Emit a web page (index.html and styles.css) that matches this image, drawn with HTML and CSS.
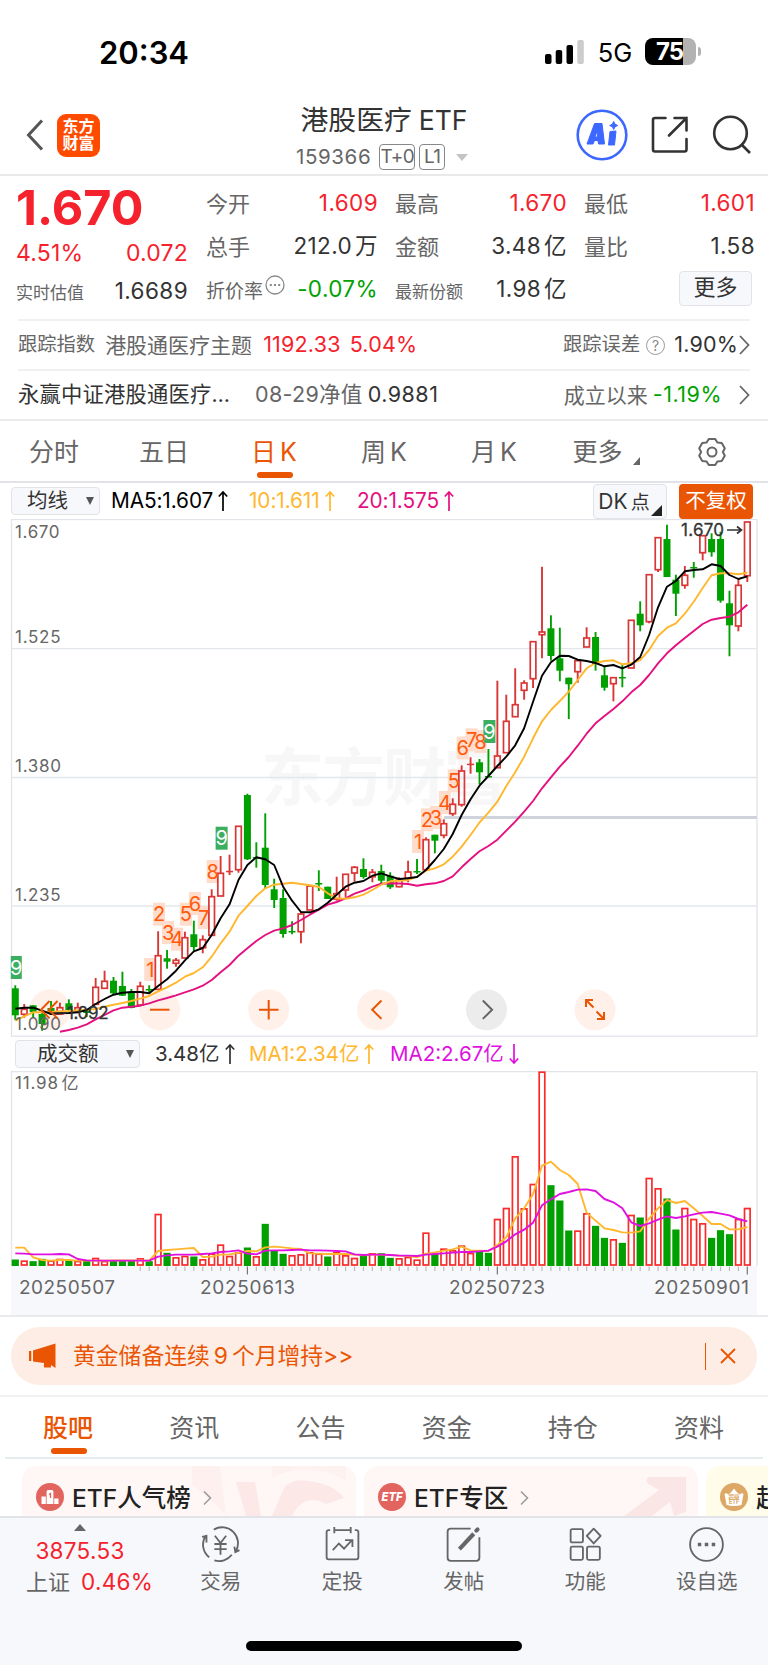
FILE: index.html
```html
<!DOCTYPE html>
<html lang="zh-CN">

<head>
    <meta charset="UTF-8">
    <meta name="viewport" content="width=device-width, initial-scale=1.0">
    <title>港股医疗ETF</title>
    <link rel="stylesheet" href="styles.css">
</head>

<body>
    <div class="status-bar">
        <span class="time">20:34</span>
        <div class="status-right">
            <svg class="signal" width="40" height="26" viewBox="0 0 40 26">
                <rect x="0" y="15" width="6.5" height="10" rx="2" />
                <rect x="10.7" y="11" width="6.5" height="14" rx="2" />
                <rect x="21.5" y="6" width="6.5" height="19" rx="2" />
                <rect x="32.3" y="1" width="6.5" height="24" rx="2" fill="#ccc" />
            </svg>
            <span class="network">5G</span>
            <div class="battery"><span>75</span></div>
            <i class="battery-nub"></i>
        </div>
    </div>

    <header class="header">
        <div class="header-left">
            <svg width="18" height="32" viewBox="0 0 18 32" fill="none" stroke="#555" stroke-width="3">
                <path d="M16 1.5 2.500 16 16 30.500" />
            </svg>
            <div class="logo">东方<br>财富</div>
        </div>
        <div class="header-title">
            <h1>港股医疗<span>ETF</span></h1>
            <div class="header-sub">
                <span class="code">159366</span>
                <span class="tag tag-t0">T+0</span>
                <span class="tag tag-l1">L1</span>
                <i class="drop"></i>
            </div>
        </div>
        <div class="header-right">
            <svg width="52" height="52" viewBox="0 0 52 52">
                <circle cx="26" cy="26" r="24.300" fill="#fff" stroke="#3d68ff" stroke-width="2.600" />
                <path d="M18.500 14.500h7.500l2.500 20.500h-6l-.5-3.500h-3.500L17 35h-6zM21 22l-2 6h2.500z" fill="#3d68ff" fill-rule="evenodd" stroke="#3d68ff" stroke-linejoin="round" />
                <path d="m34 22.500 6-.5-1.500 14h-6z" fill="#3d68ff" stroke="#3d68ff" stroke-linejoin="round" />
                <path d="m37.700 12.500 1.300 2.700 2.700 1.300-2.700 1.300-1.300 2.700-1.300-2.700-2.700-1.300 2.700-1.300z" fill="#3d68ff" stroke="#3d68ff" />
            </svg>
            <svg width="38" height="38" viewBox="0 0 38 38" fill="none" stroke="#333" stroke-width="2.600" stroke-linecap="round">
                <path d="M14.500 2H4Q2 2 2 4V33.500Q2 35.500 4 35.500H33.500Q35.500 35.500 35.500 33.500V23" />
                <path d="M23.500 2H35.500V14.500M35.500 2 18 19.500" />
            </svg>
            <svg width="40" height="40" viewBox="0 0 40 40" fill="none" stroke="#333" stroke-width="2.600">
                <circle cx="18.500" cy="18" r="16.300" />
                <path d="m29.500 29.500 8.500 8.500" />
            </svg>
        </div>
    </header>

    <section class="quote">
        <div class="quote-price">
            <div class="price">1.670</div>
            <div class="change"><span>4.51%</span><span>0.072</span></div>
            <div class="estimate"><label>实时估值</label><span>1.6689</span></div>
        </div>
        <div class="quote-grid">
            <div class="cell"><label>今开</label><span class="red">1.609</span></div>
            <div class="cell"><label>最高</label><span class="red">1.670</span></div>
            <div class="cell"><label>最低</label><span class="red">1.601</span></div>
            <div class="cell"><label>总手</label><span>212.0<em>万</em></span></div>
            <div class="cell"><label>金额</label><span>3.48<em>亿</em></span></div>
            <div class="cell"><label>量比</label><span>1.58</span></div>
            <div class="cell"><label class="mid">折价率<svg class="dots" width="20" height="20" viewBox="0 0 20 20">
                        <circle cx="10" cy="10" r="9" fill="none" stroke="#888" stroke-width="1.300" />
                        <path d="M4.800 9h2v2h-2zM9 9h2v2H9zM13.200 9h2v2h-2z" fill="#888" />
                    </svg></label><span class="green">-0.07%</span></div>
            <div class="cell"><label class="small">最新份额</label><span>1.98<em>亿</em></span></div>
            <div class="cell cell-more"><button class="more">更多</button></div>
        </div>
    </section>

    <section class="info">
        <div class="info-row">
            <span class="gray s19">跟踪指数</span>
            <span class="gray index-name">港股通医疗主题</span>
            <span class="red index-value">1192.33</span>
            <span class="red">5.04%</span>
            <div class="info-right">
                <span class="gray s19">跟踪误差</span>
                <span class="help">?</span>
                <span class="error-value">1.90%</span>
                <svg class="arrow" width="11" height="20" viewBox="0 0 11 20"><path d="m1 1 8.500 9L1 19" /></svg>
            </div>
        </div>
        <div class="info-row">
            <span class="fund-name">永赢中证港股通医疗…</span>
            <span class="gray nav-date">08-29净值</span>
            <span class="nav-value">0.9881</span>
            <div class="info-right">
                <span class="gray since">成立以来</span>
                <span class="green since-value">-1.19%</span>
                <svg class="arrow" width="11" height="20" viewBox="0 0 11 20"><path d="m1 1 8.500 9L1 19" /></svg>
            </div>
        </div>
    </section>

    <nav class="period">
        <a>分时</a>
        <a>五日</a>
        <a class="active">日<b>K</b></a>
        <a>周<b>K</b></a>
        <a>月<b>K</b></a>
        <a class="has-corner">更多</a>
        <a>
            <svg width="30" height="30" viewBox="0 0 30 30" fill="none" stroke="#666" stroke-width="2">
                <path d="M11.800 2h6.400l2.200 3.600 4.300.3 3.100 5.300-1.900 3.800 1.900 3.800-3.100 5.300-4.300.3L18.200 28h-6.400l-2.200-3.600-4.300-.3-3.100-5.300L4.100 15 2.200 11.200l3.100-5.300 4.300-.3z" stroke-linejoin="round" />
                <circle cx="15" cy="15" r="4.500" />
            </svg>
        </a>
    </nav>

    <section class="chart">
        <div class="toolbar">
            <button class="select select-ma">均线<i></i></button>
            <span class="ma5">MA5:1.607<svg class="up" viewBox="0 0 10 20"><path d="M5 20V1M.8 5.500 5 1l4.200 4.500" /></svg></span>
            <span class="ma10">10:1.611<svg class="up" viewBox="0 0 10 20"><path d="M5 20V1M.8 5.500 5 1l4.200 4.500" /></svg></span>
            <span class="ma20">20:1.575<svg class="up" viewBox="0 0 10 20"><path d="M5 20V1M.8 5.500 5 1l4.200 4.500" /></svg></span>
            <button class="dk">DK<em>点</em></button>
            <button class="adjust">不复权</button>
        </div>
        <svg id="kline" width="768" height="518" viewBox="0 519 768 518"></svg>
        <div class="toolbar toolbar-vol">
            <button class="select select-vol">成交额<i></i></button>
            <span class="vol">3.48亿<svg class="up" viewBox="0 0 10 20"><path d="M5 20V1M.8 5.500 5 1l4.200 4.500" /></svg></span>
            <span class="vol-ma1">MA1:2.34亿<svg class="up" viewBox="0 0 10 20"><path d="M5 20V1M.8 5.500 5 1l4.200 4.500" /></svg></span>
            <span class="vol-ma2">MA2:2.67亿<svg class="up" viewBox="0 0 10 20"><path d="M5 0v19M.8 14.500 5 19l4.200-4.500" /></svg></span>
        </div>
        <svg id="volume" width="768" height="244" viewBox="0 1071 768 244"></svg>
    </section>

    <section class="notice">
        <div class="notice-bar">
            <svg width="30" height="26" viewBox="0 0 30 26" fill="#ea5504">
                <path d="M1 8h2.300v10H1zM5 7.500 27.500 0.500v24.500L23 22v2.500h-7V20L5 18.500z" />
            </svg>
            <span class="notice-text">黄金储备连续<b>9</b>个月增持&gt;&gt;</span>
            <i class="notice-line"></i>
            <svg width="16" height="16" viewBox="0 0 16 16" stroke="#ea5504" stroke-width="1.800"><path d="m1 1 14 14M15 1 1 15" /></svg>
        </div>
    </section>

    <nav class="tabs">
        <a class="active">股吧</a>
        <a>资讯</a>
        <a>公告</a>
        <a>资金</a>
        <a>持仓</a>
        <a>资料</a>
    </nav>

    <section class="cards">
        <div class="card">
            <svg class="card-bg" width="170" height="50" viewBox="0 0 170 50">
                <path d="M6 0h28l6 50H42L6 18z" fill="#fdf0ef" />
                <path d="M50 16h19l6 34H60zM86 50 98 22Q106 12 122 15 148 18 158 32L140 38Q118 26 106 50z" fill="#fce8e7" />
                <path d="M86 12Q120-6 160 14V0H86z" fill="#fef2f1" />
            </svg>
            <svg class="card-icon" width="28" height="28" viewBox="0 0 28 28">
                <circle cx="14" cy="14" r="14" fill="#e2645f" />
                <path d="M5.500 13.500h4.300V21H5.500zM10.600 8.500q0-1.500 1.500-1.500h3.800q1.500 0 1.500 1.500V21h-6.800zM18.200 15.500h4.300V21h-4.300z" fill="#fff" />
                <path d="M13 11.500 14.500 10.500V15" fill="none" stroke="#e2645f" stroke-width="1.300" />
            </svg>
            <b>ETF人气榜</b>
            <svg class="card-arrow" width="9" height="16" viewBox="0 0 9 16"><path d="m1 1.500 6.500 6.500L1 14.500" /></svg>
        </div>
        <div class="card">
            <svg class="card-bg card-bg-arrow" width="90" height="50" viewBox="0 0 90 50">
                <path d="M0 50 35 24 24 18Q20 12 26 11H62V46L50 50 46 36 28 50z" fill="#fbe6e6" />
            </svg>
            <svg class="card-icon" width="28" height="28" viewBox="0 0 28 28">
                <circle cx="14" cy="14" r="14" fill="#e2645f" />
                <text x="14" y="18.300" class="icon-etf" textLength="21" lengthAdjust="spacingAndGlyphs">ETF</text>
            </svg>
            <b>ETF专区</b>
            <svg class="card-arrow" width="9" height="16" viewBox="0 0 9 16"><path d="m1 1.500 6.500 6.500L1 14.500" /></svg>
        </div>
        <div class="card card-yellow">
            <svg class="card-icon" width="28" height="28" viewBox="0 0 28 28">
                <circle cx="14" cy="14" r="14" fill="#dda766" />
                <path d="M4.500 11q1.500-1.500 4 .5Q11 10 14 5.500 17 10 19.500 11.500q2.500-2 4-.5L21.500 22q-7.500 2-15 0z" fill="#fff" />
                <text x="14" y="16" class="icon-tiny">超级</text>
                <text x="14" y="21" class="icon-tiny">ETF</text>
            </svg>
            <b>超级ETF</b>
        </div>
    </section>

    <footer class="bottom-bar">
        <div class="index">
            <i></i>
            <div class="red index-point">3875.53</div>
            <div class="index-line"><span class="gray">上证</span><span class="red">0.46%</span></div>
        </div>
        <div class="action">
            <svg viewBox="0 0 40 36">
                <path d="M9 30.500A15.500 15.500 0 0 1 6 9M2 10.500 6.300 9.500V16M13.500 3.500A15.500 15.500 0 0 1 35 24.500M38.500 23.500 34.500 25.500 33.500 20M31 28A15.500 15.500 0 0 1 14 33.500" />
                <path d="m14.500 9.500 5.500 7 5.500-7M20 16.500V28M14 17.500h12M14 22.500h12" />
            </svg>
            <span>交易</span>
        </div>
        <div class="action">
            <svg viewBox="0 0 40 36">
                <path d="M8 4H6.500Q4.500 4 4.500 6V30.500Q4.500 32.500 6.500 32.500H33.500Q35.500 32.500 35.500 30.500V6Q35.500 4 33.500 4H32M12.500 4h15M12 1v6M28 1v6M10.500 23.500 16.500 17l5 5L29 14M22.500 13.800h7.200V20.500" />
            </svg>
            <span>定投</span>
        </div>
        <div class="action">
            <svg viewBox="0 0 40 36">
                <path d="M27 2.500H7.500Q4.500 2.500 4.500 5.500V31Q4.500 34 7.500 34H32.500Q35.500 34 35.500 31V11" />
                <path d="M16 22.500 30 7.500" stroke-width="4" />
                <path d="m32.500 4.500 1.200-1.200" stroke-width="4" stroke-linecap="round" />
            </svg>
            <span>发帖</span>
        </div>
        <div class="action">
            <svg viewBox="0 0 40 36">
                <rect x="5.500" y="3" width="12" height="13" rx="1.500" />
                <path d="m28 2.500 6.800 7.200L28 17l-6.800-7.300z" stroke-linejoin="round" />
                <rect x="5.500" y="20" width="12" height="13" rx="1.500" />
                <rect x="21.500" y="20" width="12.500" height="13" rx="1.500" />
            </svg>
            <span>功能</span>
        </div>
        <div class="action">
            <svg viewBox="0 0 40 36">
                <circle cx="20" cy="18" r="16" />
                <path d="M11.500 18h3.400M18.300 18h3.400M25.100 18h3.400" stroke-width="3.400" />
            </svg>
            <span>设自选</span>
        </div>
        <div class="home"></div>
    </footer>

    <script src="chart.js"></script>
</body>

</html>
```
FILE: styles.css
```css
* {
    box-sizing: border-box;
}

body {
    margin: 0;
    width: 768px;
    height: 1665px;
    overflow: hidden;
    background-color: #fff;
    color: #333;
    font-family: Inter, "Noto Sans CJK SC", sans-serif;
    font-size: 22px;
    line-height: 1;
    display: flex;
    flex-direction: column;
}

body > * {
    flex-shrink: 0;
}

em,
i {
    font-style: normal;
}

svg {
    display: block;
    flex-shrink: 0;
}

button {
    font-family: inherit;
    line-height: 1;
    padding: 0;
    color: #333;
    background-color: #f7f8fb;
    border: 1px solid #e1e3e8;
    border-radius: 4px;
}

.red {
    color: #f5222d;
}

.green {
    color: #00a200;
}

.gray {
    color: #666;
}

/* status bar */
.status-bar {
    height: 96px;
    padding: 10px 67px 0 99px;
    display: flex;
    align-items: center;
    justify-content: space-between;
    color: #000;
}

.time {
    font-size: 31px;
    font-weight: 600;
    letter-spacing: 0;
    margin-top: -1px;
}

.status-right {
    display: flex;
    align-items: center;
    margin-top: -3px;
}

.network {
    font-size: 25.500px;
    letter-spacing: -0.2px;
    margin-left: 13px;
    margin-top: 3px;
}

.battery {
    width: 51px;
    height: 27px;
    margin-left: 13px;
    border-radius: 8px;
    background: linear-gradient(to right, #000 38px, #b2b2b2 38px);
    color: #fff;
    font-size: 24px;
    font-weight: 700;
    letter-spacing: -1px;
    display: flex;
    align-items: center;
    padding-left: 11px;
}

.battery-nub {
    width: 3px;
    height: 9px;
    margin-left: 2px;
    border-radius: 0 4px 4px 0;
    background-color: #b2b2b2;
}

/* header */
.header {
    height: 80px;
    border-bottom: 2px solid #e9e9ec;
    display: grid;
    grid-template-columns: 250px 1fr 250px;
    align-items: center;
}

.header-left {
    display: flex;
    align-items: center;
    gap: 13px;
    padding-left: 26px;
}

.logo {
    width: 43px;
    height: 43px;
    border-radius: 9px;
    background-color: #ff4b00;
    color: #fff;
    font-size: 16px;
    font-weight: 700;
    line-height: 17px;
    text-align: center;
    padding-top: 4px;
}

.header-title {
    text-align: center;
}

h1 {
    margin: 0;
    font-size: 27.800px;
    font-weight: 400;
    line-height: 34px;
    padding-top: 4px;
    white-space: nowrap;
}

h1 span {
    margin-left: 7px;
    font-size: 26.500px;
    letter-spacing: 0;
}

.header-sub {
    display: flex;
    align-items: center;
    padding-left: 46px;
    margin-top: 6px;
    height: 28px;
    color: #666;
}

.code {
    font-size: 20.500px;
    letter-spacing: 0.6px;
    margin-right: 8px;
}

.tag {
    height: 26px;
    border: 1.5px solid #888;
    border-radius: 4px;
    font-size: 19px;
    line-height: 24px;
    letter-spacing: -0.6px;
    text-align: center;
}

.tag-t0 {
    width: 36px;
    margin-right: 4px;
}

.tag-l1 {
    width: 26px;
}

.drop {
    margin-left: 11px;
    border: 6px solid transparent;
    border-top: 7px solid #c4c4c4;
    border-bottom: 0;
}

.header-right {
    display: flex;
    align-items: center;
    justify-content: flex-end;
    padding-right: 16px;
}

.header-right svg:nth-child(2) {
    margin: 0 23px 0 23px;
}

/* quote */
.quote {
    height: 143px;
    display: flex;
    padding: 0 12px 0 16px;
}

.quote-price {
    width: 172px;
    margin-right: 18px;
    color: #f5222d;
}

.price {
    font-size: 48.500px;
    font-weight: 700;
    letter-spacing: 0;
    line-height: 63px;
    height: 65px;
}

.change {
    display: flex;
    justify-content: space-between;
    font-size: 23px;
    letter-spacing: 0.2px;
    line-height: 25px;
    height: 37px;
}

.estimate {
    display: flex;
    justify-content: space-between;
    align-items: center;
    color: #333;
    line-height: 24px;
    margin-top: -2px;
}

.estimate span {
    font-size: 22.500px;
    letter-spacing: 0.4px;
}

.estimate label {
    font-size: 17px;
    color: #666;
    padding-top: 5px;
}

.quote-grid {
    flex-grow: 1;
    display: grid;
    grid-template-columns: 172px 172px 171px;
    grid-template-rows: 43px 43px 43px;
    column-gap: 17px;
    padding-top: 6px;
}

.cell {
    display: flex;
    align-items: center;
    justify-content: space-between;
    font-size: 22.500px;
    letter-spacing: 0.4px;
    white-space: nowrap;
}

.cell label {
    font-size: 22px;
    color: #666;
    letter-spacing: 0;
}

.cell em {
    margin-left: 3px;
}

.cell .mid {
    font-size: 19px;
    display: flex;
    padding-top: 3px;
}

.dots {
    margin: -7px 0 0 2px;
}

.cell .small {
    font-size: 17px;
    padding-top: 5px;
}

.cell-more {
    justify-content: flex-end;
    padding-right: 3px;
}

.more {
    width: 73px;
    height: 35px;
    margin-top: -3px;
    font-size: 22px;
    padding-bottom: 2px;
}

/* index and fund rows */
.info {
    padding: 0 18px;
    border-bottom: 2px solid #ebebee;
    height: 102px;
}

.info-row {
    height: 50px;
    border-top: 2px solid #f0f0f2;
    display: flex;
    align-items: center;
    font-size: 21.500px;
    letter-spacing: 0.2px;
    white-space: nowrap;
}

.info .s19 {
    font-size: 19.300px;
    letter-spacing: 0;
}

.index-name {
    margin: 0 11px 0 10px;
    font-size: 21px;
    letter-spacing: 0;
}

.index-value {
    margin-right: 9px;
}

.info-right {
    margin-left: auto;
    display: flex;
    align-items: center;
}

.help {
    width: 19px;
    height: 19px;
    margin: 0 9px 0 6px;
    border: 1.300px solid #999;
    border-radius: 50%;
    color: #888;
    font-size: 14px;
    line-height: 17px;
    text-align: center;
}

.error-value {
    margin-right: 1px;
}

.arrow {
    fill: none;
    stroke: #666;
    stroke-width: 1.800;
}

.fund-name {
    font-size: 21.300px;
}

.nav-date {
    margin: 0 5px 0 25px;
    font-size: 21.500px;
    letter-spacing: 0.3px;
}

.nav-value {
    letter-spacing: 0.5px;
}

.since {
    font-size: 21px;
    letter-spacing: 0;
}

.since-value {
    margin: 0 17px 0 5px;
    letter-spacing: 0.5px;
}

/* period tabs */
.period {
    height: 62px;
    border-bottom: 2px solid #e2e3e9;
    display: grid;
    grid-template-columns: repeat(7, 110px);
    margin-left: -1px;
    color: #666;
    font-size: 25px;
}

.period a {
    display: flex;
    align-items: center;
    justify-content: center;
    position: relative;
    padding-top: 2px;
}

.period b {
    font-weight: 400;
    margin-left: 4px;
    font-size: 25px;
}

.period .active,
.tabs .active {
    color: #ea5504;
}

.tabs .active {
    font-weight: 500;
}

.period .active::after {
    content: "";
    position: absolute;
    left: 38px;
    bottom: 3px;
    width: 36px;
    height: 6px;
    border-radius: 3px;
    background-color: #ea5504;
}

.period .has-corner {
    padding-right: 13px;
}

.has-corner::after {
    content: "";
    position: absolute;
    right: 19px;
    bottom: 16px;
    border-left: 7px solid transparent;
    border-bottom: 8px solid #666;
}

.period a:last-child {
    padding-right: 4px;
}

/* chart */
.toolbar {
    height: 36px;
    display: flex;
    align-items: center;
    padding: 0 15px 0 11px;
    font-size: 20.800px;
    letter-spacing: -0.1px;
    white-space: nowrap;
}

.toolbar span {
    display: flex;
    align-items: center;
}

.select {
    height: 28px;
    font-size: 20.500px;
    display: flex;
    align-items: center;
    justify-content: space-between;
}

.select i {
    border: 4.500px solid transparent;
    border-top: 8px solid #555;
    border-bottom: 0;
}

.select-ma {
    width: 89px;
    padding: 0 5px 0 15px;
    margin-right: 11px;
}

.up {
    width: 10px;
    height: 20px;
    margin-left: 5px;
    fill: none;
    stroke: currentColor;
    stroke-width: 1.700;
}

.ma5 {
    color: #000;
    width: 138px;
}

.ma10 {
    color: #ffb72e;
    width: 108px;
}

.ma20 {
    color: #e4107f;
}

.dk {
    width: 74px;
    height: 35px;
    margin-left: auto;
    margin-right: 12px;
    padding-right: 12px;
    font-size: 21px;
    position: relative;
}

.dk em {
    margin-left: 3px;
    font-size: 19px;
}

.dk::after {
    content: "";
    position: absolute;
    right: 4px;
    bottom: 2px;
    border-left: 11px solid transparent;
    border-bottom: 11px solid #222;
}

.adjust {
    width: 74px;
    height: 35px;
    color: #fff;
    background-color: #ea5504;
    border: 0;
    font-size: 20.500px;
}

.toolbar-vol {
    height: 34px;
    padding-left: 15px;
}

.select-vol {
    width: 125px;
    padding: 0 5px 0 21px;
    margin-right: 15px;
}

.vol {
    width: 94px;
}

.toolbar .vol,
.toolbar .vol-ma1,
.toolbar .vol-ma2 {
    font-size: 20.500px;
    letter-spacing: 0;
}

.vol-ma1 {
    color: #ffb72e;
    width: 141px;
}

.vol-ma2 {
    color: #e010e0;
}

.axis {
    font-size: 17px;
    fill: #666;
}

.date {
    font-size: 19px;
    fill: #666;
}

.extreme {
    font-size: 17px;
    fill: #333;
    stroke: #333;
    stroke-width: 0.300;
}

.badge {
    font-size: 20px;
    text-anchor: middle;
}

.watermark {
    font-size: 63px;
    font-weight: 700;
    fill: #f7f7f7;
}

/* notice */
.notice {
    height: 82px;
    padding: 10px 11px 0;
    border-top: 2px solid #e9eaee;
    border-bottom: 2px solid #f1f1f4;
}

.notice-bar {
    height: 58px;
    border-radius: 29px;
    background-color: #feede4;
    color: #ea5504;
    display: flex;
    align-items: center;
    padding: 0 21px 0 17px;
}

.notice-text {
    margin-left: 15px;
    font-size: 22.800px;
}

.notice-text b {
    font-weight: 400;
    margin: 0 4px;
}

.notice-line {
    width: 1.500px;
    height: 27px;
    margin: 0 14px 0 auto;
    background-color: #ea5504;
}

/* content tabs */
.tabs {
    height: 62px;
    margin: 0 5px;
    border-bottom: 2px solid #e6ebed;
    display: grid;
    grid-template-columns: repeat(6, 126.200px);
    color: #666;
    font-size: 25px;
}

.tabs a {
    position: relative;
    display: flex;
    align-items: center;
    justify-content: center;
    padding-top: 2px;
}

.tabs .active::after {
    content: "";
    position: absolute;
    left: 46px;
    bottom: 3px;
    width: 36px;
    height: 6px;
    border-radius: 3px;
    background-color: #ea5504;
}

/* cards */
.cards {
    height: 57px;
    padding: 7px 0 0 22px;
    display: flex;
    gap: 8px;
    overflow: hidden;
}

.card {
    position: relative;
    width: 334px;
    height: 80px;
    flex-shrink: 0;
    border-radius: 14px;
    background-color: #fff7f6;
    overflow: hidden;
    display: flex;
    align-items: flex-start;
    padding: 17px 0 0 14px;
}

.card-bg {
    position: absolute;
    right: 0;
    top: 0;
}

.card-bg-arrow {
    right: -36px;
    width: 130px;
}

.card b {
    position: relative;
    margin: 2px 12px 0 8px;
    color: #222;
    font-size: 24.500px;
    font-weight: 500;
    line-height: 26px;
    white-space: nowrap;
}

.card-arrow {
    margin-top: 7px;
    position: relative;
    fill: none;
    stroke: #999;
    stroke-width: 1.500;
}

.card-yellow {
    background-color: #fffcea;
}

.icon-etf {
    fill: #fff;
    font-size: 12px;
    font-weight: 800;
    font-style: italic;
    text-anchor: middle;
}

.icon-tiny {
    fill: #dda766;
    font-size: 5.500px;
    font-weight: 700;
    text-anchor: middle;
}

/* bottom bar */
.bottom-bar {
    position: relative;
    height: 149px;
    border-top: 2px solid #e1e3e8;
    background-color: #f7f8fb;
    display: flex;
}

.index {
    width: 160px;
    display: flex;
    flex-direction: column;
    align-items: center;
    padding-top: 6px;
}

.index i {
    border: 6px solid transparent;
    border-bottom: 7px solid #666;
    border-top: 0;
}

.index-point {
    margin: 8px 0 8px;
    line-height: 24px;
}

.index-line {
    width: 160px;
    padding-left: 26px;
    display: flex;
    gap: 11px;
}

.index .red {
    font-size: 22.500px;
    letter-spacing: 0.3px;
}

.action {
    width: 121.500px;
    display: flex;
    flex-direction: column;
    align-items: center;
    padding-top: 8px;
    color: #666;
    font-size: 20.500px;
}

.action svg {
    width: 41px;
    height: 37px;
    margin-bottom: 9px;
    fill: none;
    stroke: #666;
    stroke-width: 1.800;
}

.home {
    position: absolute;
    left: 246px;
    bottom: 14px;
    width: 276px;
    height: 10px;
    border-radius: 5px;
    background-color: #000;
}
```
FILE: chart.js
```js
const RED = '#d93636'
const GREEN = '#00a000'
const x = (i) => 15.3 + i * 8.927

// direction, body top, body bottom, high, low
const candles = [
    ['g', 988.3, 1015.3, 985.3, 1020], ['r', 1009.3, 1014.3, 1004, 1017.7], ['g', 1005.3, 1012, 1005.3, 1017], ['g', 1014, 1024, 1013, 1030.7],
    ['g', 1008, 1013, 1001, 1015], ['r', 1007.7, 1014, 1002.7, 1014], ['g', 1003.3, 1010, 999.3, 1011], ['r', 1007.7, 1011, 1002.7, 1011],
    ['g', 1010, 1013, 1009, 1017], ['r', 987.3, 1004.3, 978, 1004.3], ['r', 981.3, 988.3, 970.7, 988.3], ['g', 980.7, 993.3, 977, 994],
    ['g', 986, 995.7, 971.7, 996], ['g', 992, 1008, 989, 1008.3], ['r', 986.3, 1005, 981.7, 1005], ['g', 989, 990.3, 985.3, 993.7],
    ['r', 955.7, 989.3, 931.3, 989.3], ['g', 958.3, 961.7, 950, 968.7], ['r', 960.3, 963.3, 958, 966.7], ['r', 937.7, 958, 931.7, 958],
    ['g', 934.3, 947, 920.7, 951.7], ['r', 939.7, 947.7, 935.3, 953.3], ['r', 896.7, 935.3, 889.3, 936], ['r', 873.3, 896, 856, 896],
    ['r', 870.8, 871.4, 854.7, 875], ['r', 826.3, 869.7, 826, 872.7], ['g', 795, 859.3, 793.7, 860], ['g', 857, 858, 842.3, 867.7],
    ['g', 847.7, 885, 813.3, 888], ['g', 889.3, 900, 878.7, 908], ['g', 898, 934, 889.3, 937.7], ['g', 931, 932, 921.3, 934.3],
    ['r', 914, 931.7, 912, 943.3], ['r', 886, 910, 886, 910], ['g', 883, 884, 870.3, 891], ['g', 886.7, 899, 886.7, 899],
    ['r', 893.7, 899, 876.7, 900.7], ['r', 874.3, 890, 874.3, 897.3], ['r', 867.3, 873, 866, 881.7], ['g', 869, 877, 858.3, 878.7],
    ['r', 872.3, 876.7, 869, 882.3], ['g', 871, 880.7, 864.7, 884.7], ['g', 875.7, 887.3, 872.3, 889], ['r', 880, 886.7, 877.3, 887.3],
    ['r', 872, 878, 860.7, 882.3], ['g', 871, 872, 859, 874], ['r', 839.7, 869.7, 837.3, 870], ['g', 834.7, 840.7, 834.7, 853.3],
    ['r', 823.7, 835.3, 819.3, 838.3], ['r', 804.3, 813.7, 798.3, 816], ['r', 771, 804.7, 765.3, 806.7], ['r', 763.7, 765, 757.3, 773.7],
    ['g', 762.3, 772.3, 759, 784.3], ['g', 776, 777, 749, 777.3], ['r', 756, 767.7, 680.7, 768], ['r', 721.3, 752.7, 694.7, 753],
    ['r', 704.7, 716.7, 668.3, 717], ['r', 683, 690.3, 680.3, 699.7], ['r', 641.7, 678.7, 641, 688], ['r', 632, 634.7, 566.7, 658.3],
    ['g', 628.3, 656, 615.3, 660.7], ['g', 658.3, 670.7, 627.7, 681.3], ['g', 677.7, 684.3, 677.7, 719], ['r', 660.7, 671.7, 659.7, 682.7],
    ['r', 638, 647, 627.3, 647], ['g', 637, 664, 632, 670.7], ['g', 675.3, 687.7, 666.7, 690.7], ['r', 677.7, 683.7, 677.7, 701.3],
    ['g', 677, 678, 665, 687.3], ['r', 620.3, 668, 620.3, 668], ['g', 613.7, 625.3, 601.3, 631.3], ['r', 574.7, 621.7, 574, 623.3],
    ['r', 537.7, 569.7, 537, 572], ['g', 539, 577, 524.7, 577], ['g', 579.7, 593.7, 574.7, 616], ['r', 575.3, 585.3, 566, 588.7],
    ['g', 567, 568.5, 562, 577.7], ['r', 535.7, 552.7, 535, 560.3], ['g', 539, 552.3, 533.3, 556.7], ['g', 539, 600.7, 531.7, 602.7],
    ['g', 603.3, 625.3, 590.7, 656.3], ['r', 585.3, 626, 578, 631.3], ['r', 522, 575.7, 522, 582]
]

const ma5 = [1008.7, 1007.7, 1007.7, 1010.7, 1014, 1013.3, 1013, 1012.3, 1010, 1004, 999, 994.7, 992.7, 992, 992, 993.3, 986, 979.3, 970.7, 960.3,
    951.3, 948, 935, 918.3, 904.3, 880, 865, 857.3, 859.3, 865, 886.7, 900.7, 912, 912.3, 909.3, 902.7, 894.7, 886.7, 882.7, 881,
    875.7, 873.3, 876.3, 879, 878.3, 877, 870, 860, 849, 834, 815, 799.3, 785.7, 776, 766, 756.7, 745.3, 728.3, 701.7, 675.7,
    662.3, 655.7, 656, 659.7, 661, 663, 666.3, 665, 668.3, 664.7, 657, 635, 607.3, 586.7, 581, 571.3, 570, 569.3, 564.3, 566, 575, 579, 576.3]
const ma10 = [1020.7, 1016.3, 1012.3, 1012.3, 1012, 1011.3, 1011, 1010.3, 1009.7, 1009, 1006.7, 1004.7, 1003, 1001, 998.7, 996, 991.3, 987.3, 982.7, 976.7,
    973, 967.3, 956.7, 943.3, 931.7, 915.7, 906, 896, 888.3, 884.7, 883.7, 882.7, 884, 885.3, 887, 893.3, 898.3, 898.7, 897.3, 894.7,
    890, 884.7, 881.3, 880.7, 880, 876.7, 870.7, 868.3, 864.3, 856.7, 846.7, 835, 822.5, 812.7, 801.7, 786, 772.3, 756.7, 738.3, 721.3,
    710, 701, 691.7, 680, 668.3, 663, 661, 660.3, 664.3, 663.3, 660, 650, 636, 627.7, 623.3, 613.7, 601.7, 588, 575.3, 573.3, 573.3, 574.3, 572.7]
const ma20 = [1031.7, 1030, 1027.7, 1024.3, 1019.3, 1015, 1010.3, 1007.7, 1006.7, 1005.7, 1003.3, 1000.3, 998, 995.3, 992.3,
    989.3, 985.7, 980, 972.3, 965, 955.7, 948.3, 941, 935, 930.7, 928.3, 925, 920, 914.7, 909.7, 904.7, 902, 898.3, 893.7, 890.7,
    886.7, 883.7, 883.3, 883.5, 884, 885.7, 884.3, 883.3, 881, 876.3, 867.3, 859, 851.3, 846, 839.7, 830.7, 821.7, 811.7, 801, 788.3,
    777.3, 766.7, 757, 745.7, 733.7, 723.3, 716, 709, 701.3, 692.3, 685, 675, 663.3, 653.3, 645.3, 638, 631, 624, 619.7, 618, 616.7, 612.3, 604.7]

// candle index, label, top
const badges = [
    [0, '9', 956], [15, '1', 958], [16, '2', 902.7], [17, '3', 921], [18, '4', 927.7], [19, '5', 902.7], [20, '6', 892], [21, '7', 906],
    [22, '8', 860], [23, '9', 826.7], [45, '1', 830], [46, '2', 808.3], [47, '3', 806], [48, '4', 791], [49, '5', 769.3],
    [50, '6', 736.5], [51, '7', 728.3], [52, '8', 730], [53, '9', 720]
]

const volumes = [690, 693, 695, 688, 693, 688, 694, 694, 694, 685, 694, 694, 693, 693, 686, 695, 553, 670, 683, 679,
    681, 689, 672, 645, 679, 668, 654, 680, 583, 662, 673, 677, 674, 668, 672, 681, 668, 677, 685, 674,
    671, 671, 685, 686, 682, 690, 609, 672, 657, 662, 648, 670, 666, 670, 568, 535, 380, 536, 463, 126,
    467, 513, 603, 603, 551, 589, 625, 629, 640, 556, 564, 445, 476, 507, 600, 535, 568, 581, 625, 602, 614, 568, 535]
const volumeColors = 'grggrrgrgrrgggrgrgrrgrrrrrgrgggrrrrgrrrgrggrrrrgrrrrggrrrrrrgggrrggrgrgrrggrrrgggrr'
const volMa1 = [653, 653, 682, 690, 692, 690, 690, 692, 692, 692, 692, 691, 691, 691, 691, 692, 663, 660, 658, 656,
    654, 681, 680, 674, 673, 668, 663, 664, 652, 650, 652, 655, 657, 670, 671, 672, 672, 672, 674, 676,
    674, 674, 675, 677, 678, 682, 671, 667, 662, 658, 650, 661, 662, 663, 645, 622, 565, 535, 492, 407,
    395, 420, 435, 462, 548, 572, 595, 600, 607, 608, 604, 566, 535, 510, 519, 513, 535, 558, 582, 582, 598, 598, 591]
const volMa2 = [670, 671, 673, 673, 673, 672, 673, 687, 691, 692, 692, 692, 692, 692, 692, 692, 680, 676, 674, 674,
    674, 672, 670, 666, 664, 661, 671, 673, 662, 661, 661, 660, 659, 661, 661, 662, 663, 664, 673, 675,
    674, 674, 675, 677, 677, 678, 674, 672, 670, 668, 666, 666, 664, 662, 650, 634, 613, 599, 578, 526,
    508, 492, 486, 479, 478, 483, 507, 517, 535, 577, 588, 580, 569, 559, 564, 559, 553, 548, 546, 551, 556, 567, 574]
const volY = (v) => 1030 + v / 3

function rect(x, y, w, h, attrs) {
    return `<rect x="${x}" y="${y}" width="${w}" height="${h}" ${attrs}/>`
}

function hline(y, color, width = 1, x1 = 11, x2 = 757) {
    return `<path d="M${x1} ${y}H${x2}" stroke="${color}" stroke-width="${width}"/>`
}

function curve(values, color, start = 0, toY = (v) => v) {
    const points = values.map((v, i) => `${x(i + start)},${toY(v)}`).join(' ')
    return `<polyline points="${points}" fill="none" stroke="${color}" stroke-width="1.9" stroke-linejoin="round"/>`
}

function label(x, y, text, cls, length) {
    return `<text x="${x}" y="${y}" class="${cls}" textLength="${length}">${text}</text>`
}

function drawKline() {
    let s = '<text x="261" y="800" class="watermark" textLength="246">东方财富</text>'
    s += rect(11.5, 519.5, 745.5, 516.7, 'fill="none" stroke="#e3e4ea" stroke-width="1.3"')
    for (const y of [648.7, 777.5, 906]) s += hline(y, '#e3e7ec', 1.3)

    const buttons = [50, 159.7, 268.7, 377.7, 486.5, 595]
    buttons.forEach((cx, i) => {
        s += `<circle cx="${cx}" cy="1009.7" r="20.5" fill="${i === 4 ? '#ececec' : '#fff1ea'}"/>`
    })
    s += hline(817.5, '#cfd4dc', 3, 444)

    for (const [i, text, top] of badges) {
        const nine = text === '9'
        s += rect(x(i) + 1 - 6 + (i ? 0 : 0.5), top, i ? 12 : 11, 23, `fill="${nine ? '#3bae60' : '#ffdccb'}"`)
    }

    candles.forEach(([dir, top, bottom, high, low], i) => {
        const cx = x(i)
        const color = dir === 'r' ? RED : GREEN
        const wick = (a, b) => b > a ? `<path d="M${cx} ${a}V${b}" stroke="${color}" stroke-width="1.9"/>` : ''
        if (dir === 'r' && bottom - top > 2) {
            s += wick(high, top) + wick(bottom, low)
            s += rect(cx - 2.8, top, 5.6, bottom - top, `fill="none" stroke="${color}" stroke-width="1.7"`)
        } else {
            s += wick(high, low) + rect(cx - 3.5, top, 7, Math.max(bottom - top, 1.5), `fill="${color}"`)
        }
    })

    s += curve(ma20, '#e4107f', 5) + curve(ma10, '#ffb72e') + curve(ma5, '#000')

    for (const [i, text, top] of badges) {
        s += `<text x="${x(i) + 1}" y="${top + 18.7}" class="badge" fill="${text === '9' ? '#fff' : '#ff5a0a'}">${text}</text>`
    }

    s += label(15, 537.7, '1.670', 'axis', 44.5)
    s += label(15, 642.5, '1.525', 'axis', 45.5)
    s += label(15, 771.5, '1.380', 'axis', 46)
    s += label(15, 900.5, '1.235', 'axis', 45.5)
    s += label(15, 1030, '1.090', 'axis', 46)
    s += label(67, 1019, '1.092', 'extreme', 41.5)
    s += label(681, 536.3, '1.670', 'extreme', 43)
    s += '<path d="M727 530h14M737 526.500l4.500 3.500-4.500 3.500" fill="none" stroke="#333" stroke-width="1.7"/>'
    s += '<path d="M50 1013h16" stroke="#333" stroke-width="1.5"/>'

    s += `<g fill="none" stroke="#ea5504" stroke-width="2">
        <path d="M49.500 1001l-8.500 8.700 8.500 8.700M57.500 1001l-8.500 8.700 8.500 8.700"/>
        <path d="M150 1009.700h19.500"/>
        <path d="M259 1009.700h19.500M268.700 1000v19.500"/>
        <path d="M381.500 1000.500l-9.300 9.200 9.300 9.200"/>
        <path d="M482.800 1000.500l9.300 9.200-9.300 9.200" stroke="#666"/>
        <path d="M586 1007v-7h7M586.500 1000.500l7 7M604 1012v7h-7M603.500 1018.500l-7-7"/>
    </g>`
    document.querySelector('#kline').innerHTML = s
}

function drawVolume() {
    let s = rect(11, 1266, 746, 49, 'fill="#f7f8fb"')
    s += '<path d="M11.500 1266V1071.600H757V1266" fill="none" stroke="#e3e4ea" stroke-width="1.3"/>'
    volumes.forEach((v, i) => {
        const top = volY(v)
        const height = 1265.5 - top
        s += volumeColors[i] === 'r'
            ? rect(x(i) - 2.8, top + 0.2, 5.6, height - 0.7, 'fill="#fff" stroke="#fa2a2a" stroke-width="1.7"')
            : rect(x(i) - 3.6, top - 0.5, 7.2, height + 1, `fill="${GREEN}"`)
    })
    s += curve(volMa1, '#ffb72e', 0, volY) + curve(volMa2, '#e010e0', 0, volY)
    for (let i = 14; i < 83; i++) {
        const major = i === 26 || i === 54 || i === 82
        s += `<path d="M${x(i)} 1266.500v${major ? 8 : 4.5}" stroke="${major ? '#777' : '#bbb'}" stroke-width="1.2"/>`
    }
    s += label(15, 1089.3, '11.98', 'axis', 43)
    s += label(61.5, 1089.3, '亿', 'axis', 17)
    s += label(19, 1293.7, '20250507', 'date', 96)
    s += label(200, 1293.7, '20250613', 'date', 95)
    s += label(449, 1293.7, '20250723', 'date', 96)
    s += label(654, 1293.7, '20250901', 'date', 95)
    document.querySelector('#volume').innerHTML = s
}

drawKline()
drawVolume()
```
